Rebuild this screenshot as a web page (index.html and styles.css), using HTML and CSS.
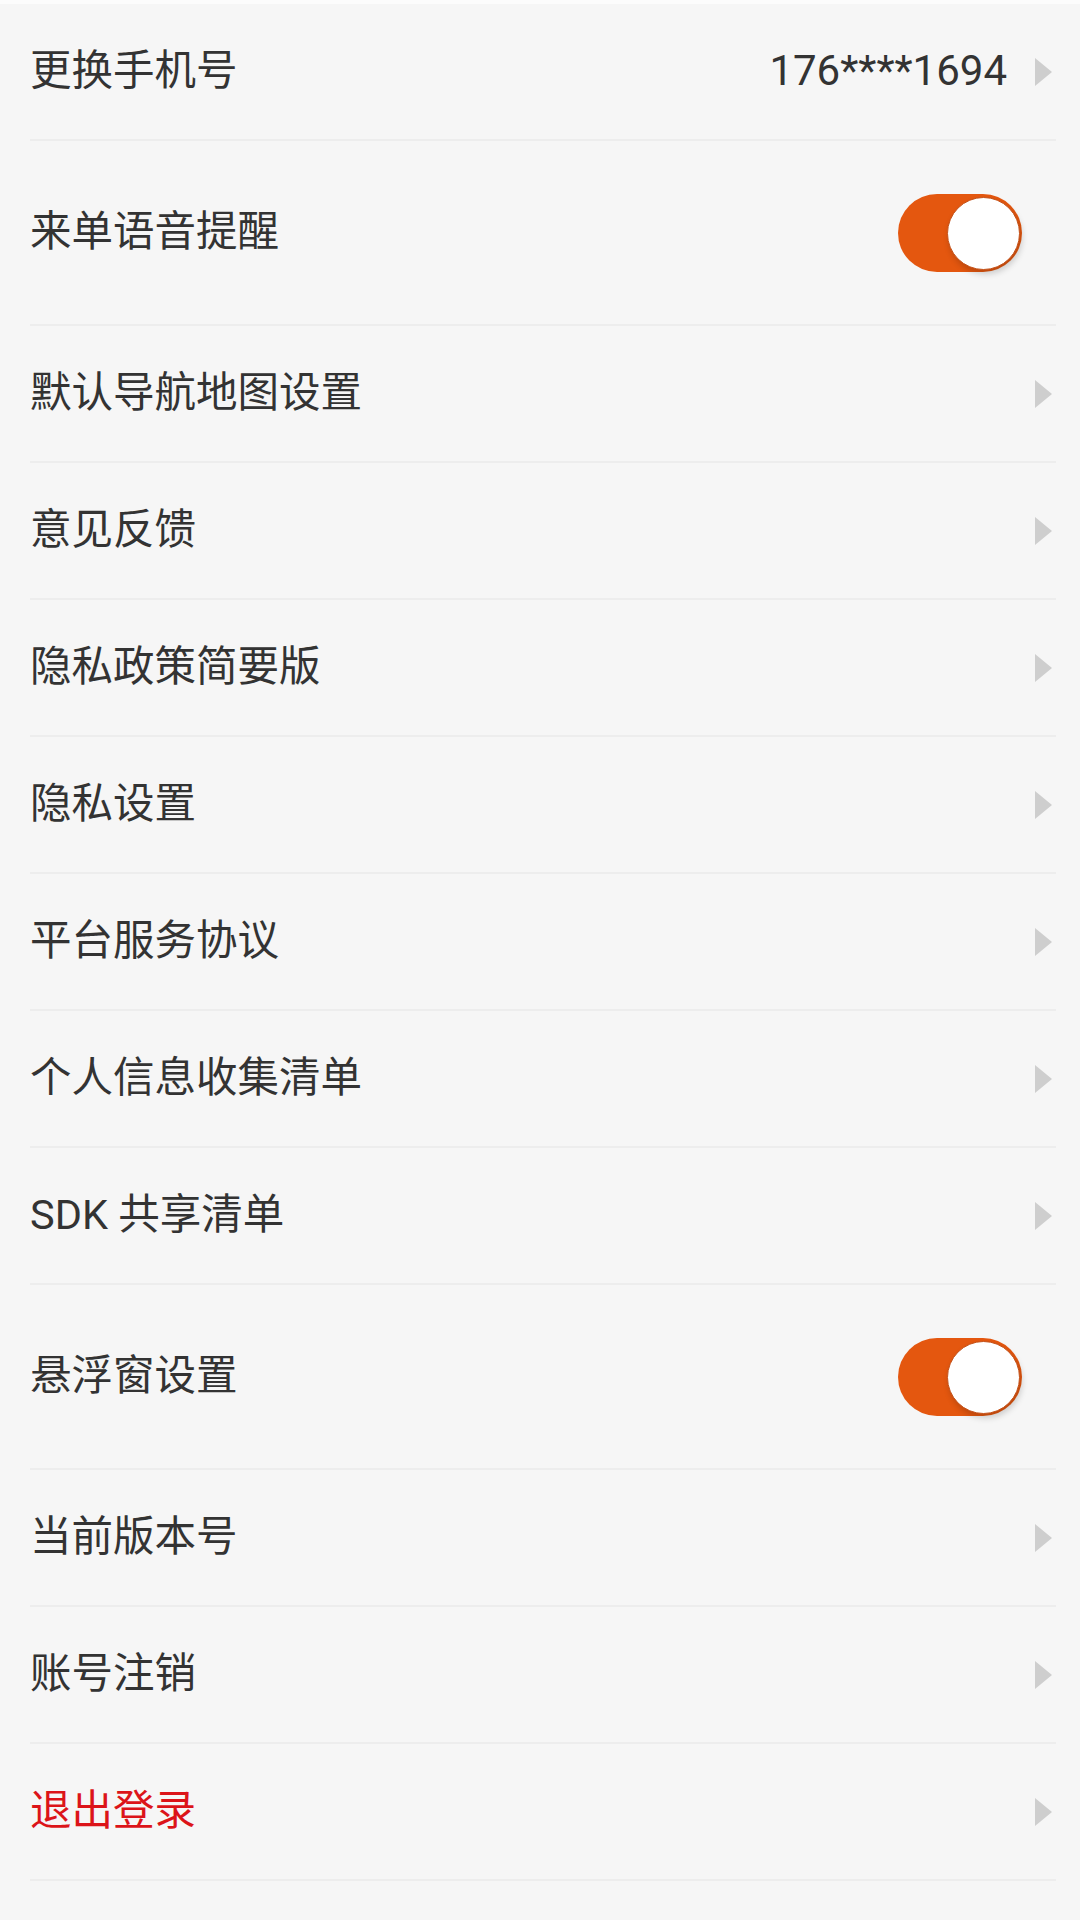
FILE: index.html
```html
<!DOCTYPE html>
<html lang="zh-CN">
<head>
    <meta charset="UTF-8">
    <meta name="viewport" content="width=device-width, initial-scale=1.0">
    <title>设置</title>
    <link rel="stylesheet" href="styles.css">
</head>
<body>
    <div class="top-strip"></div>

    <div class="settings-list">
        <div class="setting-row">
            <div class="setting-label">更换手机号</div>
            <div class="setting-right">
                <span class="setting-value">176****1694</span>
                <svg class="arrow" viewBox="0 0 17 28"><polygon points="0,0 17,14 0,28" /></svg>
            </div>
        </div>

        <div class="setting-row tall">
            <div class="setting-label">来单语音提醒</div>
            <div class="switch on"><span class="switch-knob"></span></div>
        </div>

        <div class="setting-row">
            <div class="setting-label">默认导航地图设置</div>
            <svg class="arrow" viewBox="0 0 17 28"><polygon points="0,0 17,14 0,28" /></svg>
        </div>

        <div class="setting-row">
            <div class="setting-label">意见反馈</div>
            <svg class="arrow" viewBox="0 0 17 28"><polygon points="0,0 17,14 0,28" /></svg>
        </div>

        <div class="setting-row">
            <div class="setting-label">隐私政策简要版</div>
            <svg class="arrow" viewBox="0 0 17 28"><polygon points="0,0 17,14 0,28" /></svg>
        </div>

        <div class="setting-row">
            <div class="setting-label">隐私设置</div>
            <svg class="arrow" viewBox="0 0 17 28"><polygon points="0,0 17,14 0,28" /></svg>
        </div>

        <div class="setting-row">
            <div class="setting-label">平台服务协议</div>
            <svg class="arrow" viewBox="0 0 17 28"><polygon points="0,0 17,14 0,28" /></svg>
        </div>

        <div class="setting-row">
            <div class="setting-label">个人信息收集清单</div>
            <svg class="arrow" viewBox="0 0 17 28"><polygon points="0,0 17,14 0,28" /></svg>
        </div>

        <div class="setting-row">
            <div class="setting-label">SDK 共享清单</div>
            <svg class="arrow" viewBox="0 0 17 28"><polygon points="0,0 17,14 0,28" /></svg>
        </div>

        <div class="setting-row tall">
            <div class="setting-label">悬浮窗设置</div>
            <div class="switch on"><span class="switch-knob"></span></div>
        </div>

        <div class="setting-row">
            <div class="setting-label">当前版本号</div>
            <svg class="arrow" viewBox="0 0 17 28"><polygon points="0,0 17,14 0,28" /></svg>
        </div>

        <div class="setting-row">
            <div class="setting-label">账号注销</div>
            <svg class="arrow" viewBox="0 0 17 28"><polygon points="0,0 17,14 0,28" /></svg>
        </div>

        <div class="setting-row">
            <div class="setting-label logout">退出登录</div>
            <svg class="arrow" viewBox="0 0 17 28"><polygon points="0,0 17,14 0,28" /></svg>
        </div>
    </div>
</body>
</html>
```

FILE: styles.css
```css
body {
    margin: 0;
    padding: 0;
    font-family: Roboto, 'Noto Sans CJK SC', sans-serif;
    background-color: #f6f6f6;
    color: #333333;
    min-height: 1920px;
}

.top-strip {
    height: 4px;
    background: #fcfcfc;
}

.settings-list {
    display: flex;
    flex-direction: column;
}

.setting-row {
    box-sizing: border-box;
    height: 137px;
    margin: 0 24px 0 30px;
    padding-right: 4px;
    display: flex;
    align-items: center;
    justify-content: space-between;
    border-bottom: 2px solid #ededed;
}

.setting-row.tall {
    height: 185px;
}

.setting-label {
    font-size: 41.5px;
    line-height: 1;
    padding-bottom: 2px;
}

.setting-label.logout {
    color: #dc1419;
}

.setting-right {
    display: flex;
    align-items: center;
    gap: 28px;
}

.setting-value {
    font-size: 42px;
    line-height: 1;
    padding-bottom: 2px;
}

.arrow {
    width: 17px;
    height: 28px;
    fill: #cecece;
}

.switch {
    position: relative;
    width: 124px;
    height: 78px;
    border-radius: 39px;
    background: #d9d9d9;
    margin-right: 30px;
}

.switch.on {
    background: #e4570f;
}

.switch-knob {
    position: absolute;
    top: 3px;
    right: 2px;
    box-sizing: border-box;
    width: 73px;
    height: 73px;
    border-radius: 50%;
    background: #ffffff;
    border: 1px solid #c4521a;
    box-shadow: 2px 4px 6px rgba(0, 0, 0, 0.18);
}
```
